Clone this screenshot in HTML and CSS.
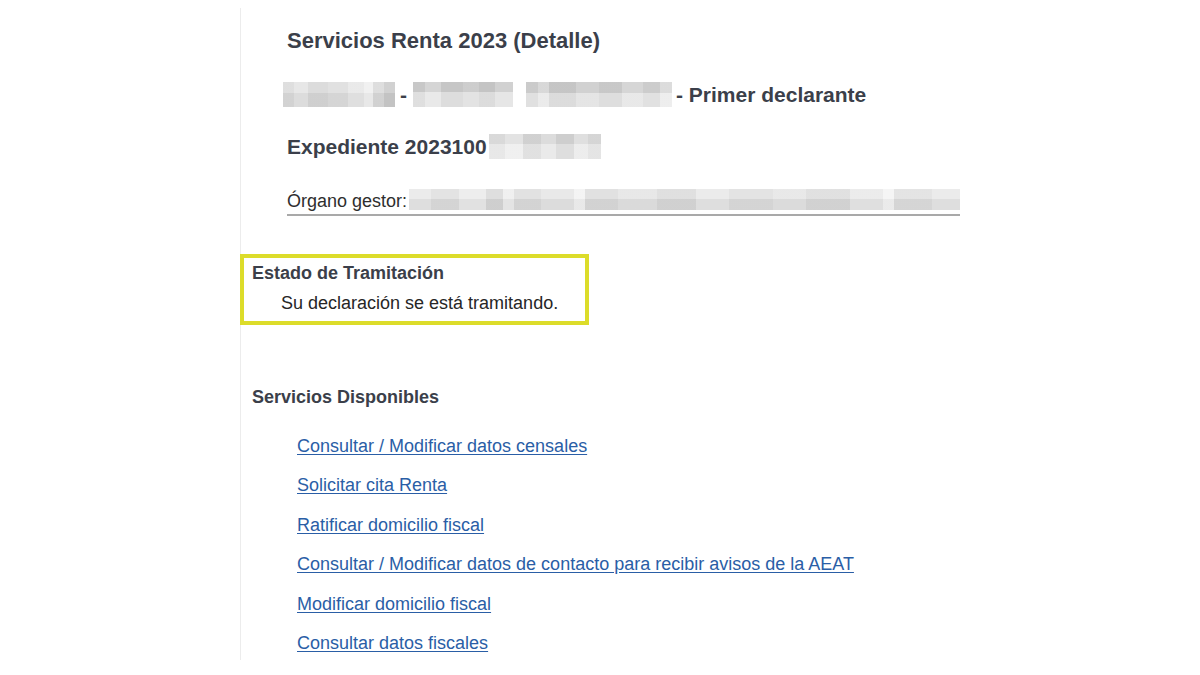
FILE: index.html
```html
<!DOCTYPE html>
<html lang="es">
<head>
<meta charset="utf-8">
<title>Servicios Renta 2023 (Detalle)</title>
<link rel="stylesheet" href="styles.css">
</head>
<body>
<div class="page">
  <div class="header">
    <h1 class="title">Servicios Renta 2023 (Detalle)</h1>
    <div class="row row-big">
      <span class="blur blur-a"></span>
      <span class="dash">-</span>
      <span class="blur blur-b"></span>
      <span class="blur blur-c"></span>
      <span class="txt">- Primer declarante</span>
    </div>
    <div class="row row-big">
      <span class="txt">Expediente 2023100</span>
      <span class="blur blur-d"></span>
    </div>
    <div class="organo">
      <span class="organo-label">Órgano gestor:</span>
      <span class="blur blur-e"></span>
    </div>
  </div>

  <div class="estado">
    <div class="estado-title">Estado de Tramitación</div>
    <div class="estado-text">Su declaración se está tramitando.</div>
  </div>

  <div class="section-title">Servicios Disponibles</div>
  <ul class="links">
    <li><a href="#">Consultar / Modificar datos censales</a></li>
    <li><a href="#">Solicitar cita Renta</a></li>
    <li><a href="#">Ratificar domicilio fiscal</a></li>
    <li><a href="#">Consultar / Modificar datos de contacto para recibir avisos de la AEAT</a></li>
    <li><a href="#">Modificar domicilio fiscal</a></li>
    <li><a href="#">Consultar datos fiscales</a></li>
  </ul>
</div>
</body>
</html>
```

FILE: styles.css
```css
html, body {
  margin: 0;
  padding: 0;
  background: #ffffff;
}

body {
  font-family: "Liberation Sans", Arial, sans-serif;
  font-size: 18px;
  color: #2b2b2b;
}

.page {
  margin: 8px 0 0 240px;
  width: 760px;
  height: 652px;
  border-left: 1px solid #ececec;
  box-sizing: border-box;
}

.header {
  padding-left: 46px;
  padding-top: 4.5px;
}

.title {
  margin: 0;
  font-size: 22px;
  font-weight: bold;
  line-height: 56px;
  color: #3b3f4a;
}

.row {
  display: flex;
  align-items: center;
  height: 52px;
}

.row-big .txt,
.row-big .dash {
  font-size: 21px;
  font-weight: bold;
  line-height: 52px;
  color: #3b3f4a;
  white-space: nowrap;
}

.blur {
  display: inline-block;
  height: 25px;
  flex: none;
}

.blur-a {
  width: 112px;
  margin-left: -4px;
  background:
    linear-gradient(to bottom, rgba(255,255,255,0.15) 0 45%, rgba(0,0,0,0.03) 45% 100%),
    linear-gradient(to right, #d9d9d9 0 10%, #e3e3e3 10% 22%, #d6d6d6 22% 40%, #dcdcdc 40% 58%, #e6e6e6 58% 72%, #efefef 72% 80%, #d8d8d8 80% 90%, #c9c9c9 90% 100%);
}

.dash {
  margin: 0 6px 0 5px;
}

.blur-b {
  width: 100px;
  background:
    linear-gradient(to bottom, rgba(0,0,0,0.06) 0 40%, rgba(255,255,255,0.25) 40% 100%),
    linear-gradient(to right, #d4d4d4 0 12%, #e2e2e2 12% 28%, #d2d2d2 28% 50%, #dadada 50% 66%, #d0d0d0 66% 82%, #dedede 82% 100%);
}

.blur-c {
  width: 146px;
  margin-left: 13px;
  background:
    linear-gradient(to bottom, rgba(0,0,0,0.05) 0 45%, rgba(255,255,255,0.25) 45% 100%),
    linear-gradient(to right, #d6d6d6 0 8%, #e4e4e4 8% 16%, #d0d0d0 16% 34%, #dcdcdc 34% 50%, #d3d3d3 50% 66%, #e1e1e1 66% 80%, #d7d7d7 80% 92%, #e8e8e8 92% 100%);
}

.row-big .blur-c + .txt {
  margin-left: 4px;
}

.blur-d {
  width: 112px;
  margin-left: 2px;
  background:
    linear-gradient(to bottom, rgba(0,0,0,0.04) 0 40%, rgba(255,255,255,0.2) 40% 100%),
    linear-gradient(to right, #e2e2e2 0 14%, #ececec 14% 30%, #d9d9d9 30% 46%, #e5e5e5 46% 60%, #d6d6d6 60% 76%, #e8e8e8 76% 88%, #dedede 88% 100%);
}

.organo {
  display: flex;
  align-items: center;
  width: 673px;
  margin-top: 16px;
  border-bottom: 2px solid #a9a9a9;
}

.organo-label {
  font-size: 18px;
  line-height: 22px;
  color: #2e2e2e;
  white-space: nowrap;
}

.blur-e {
  flex: 1;
  height: 21px;
  margin-left: 2px;
  margin-bottom: 4px;
  background:
    linear-gradient(to bottom, rgba(255,255,255,0.2) 0 50%, rgba(0,0,0,0.035) 50% 100%),
    linear-gradient(to right, #e6e6e6 0 4%, #dcdcdc 4% 9%, #e9e9e9 9% 14%, #d6d6d6 14% 17%, #ececec 17% 19%, #dbdbdb 19% 24%, #e4e4e4 24% 30%, #f1f1f1 30% 32%, #dadada 32% 38%, #e2e2e2 38% 45%, #d8d8d8 45% 52%, #e6e6e6 52% 58%, #dcdcdc 58% 66%, #e3e3e3 66% 72%, #d9d9d9 72% 80%, #e7e7e7 80% 86%, #f3f3f3 86% 88%, #dddddd 88% 95%, #e6e6e6 95% 100%);
}

.estado {
  width: 349px;
  margin: 38px 0 0 -1px;
  border: 4px solid #dcdc2a;
  padding: 0 0 3px 8px;
  box-sizing: border-box;
}

.estado-title {
  font-size: 18px;
  font-weight: bold;
  line-height: 30px;
  color: #3b3f4a;
}

.estado-text {
  font-size: 18px;
  line-height: 30px;
  padding-left: 29px;
  color: #262626;
}

.section-title {
  margin: 57px 0 0 11px;
  font-size: 18px;
  font-weight: bold;
  line-height: 30px;
  color: #3b3f4a;
}

.links {
  list-style: none;
  margin: 15px 0 0 0;
  padding: 0 0 0 56px;
}

.links li {
  font-size: 18px;
  line-height: 39.6px;
}

.links a {
  color: #2a5ea6;
  text-decoration: underline;
  text-underline-offset: 2px;
}
```
